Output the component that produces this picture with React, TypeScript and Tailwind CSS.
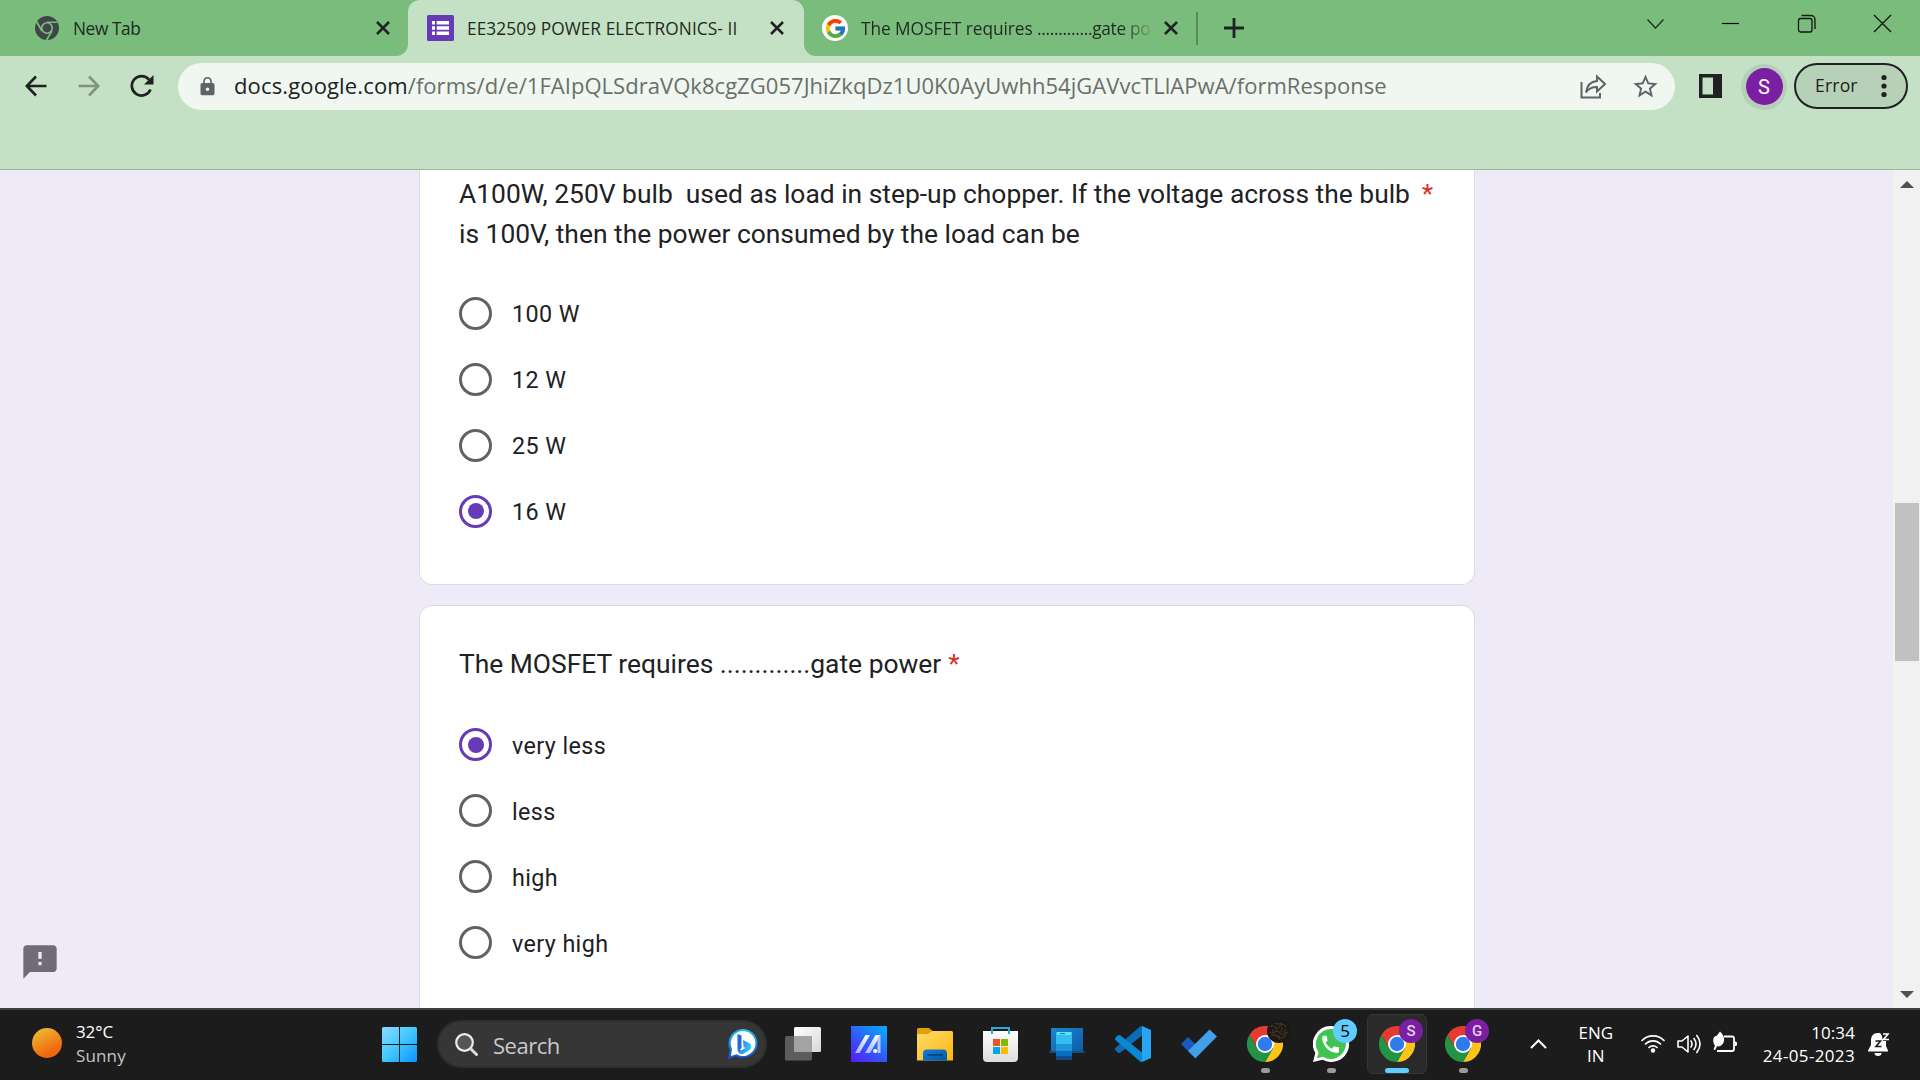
import React from "react";
import { FcGoogle } from "react-icons/fc";
import { MdFeedback, MdLock, MdStarBorder } from "react-icons/md";

const UI = "font-['Open_Sans','Noto_Sans',sans-serif]";

function CloseX({ className = "" }: { className?: string }) {
  return (
    <svg className={`h-[14px] w-[14px] shrink-0 ${className}`} viewBox="0 0 14 14">
      <path d="M1 1l12 12M13 1L1 13" stroke="#202124" strokeWidth="2.5" fill="none" />
    </svg>
  );
}

function MonoChrome() {
  return (
    <svg className="h-6 w-6 shrink-0" viewBox="0 0 48 48">
      <circle cx="24" cy="24" r="24" fill="#3f4548" />
      <circle cx="24" cy="24" r="10.5" fill="none" stroke="#7abc7c" strokeWidth="3.4" />
      <path d="M24 12.5H45M34 30L23 48M14 30L3 11" stroke="#7abc7c" strokeWidth="3.4" fill="none" />
    </svg>
  );
}

function ChromeLogo() {
  return (
    <svg className="h-9 w-9" viewBox="0 0 48 48">
      <path d="M24 12H44.8A24 24 0 0 1 24 48L34.4 30Z" fill="#fcc419" />
      <path d="M3.2 12A24 24 0 0 1 44.8 12H24L13.6 30Z" fill="#e53c31" />
      <path d="M3.2 12A24 24 0 0 0 24 48L34.4 30L24 24L13.6 30Z" fill="#239346" />
      <circle cx="24" cy="24" r="12" fill="#fff" />
      <circle cx="24" cy="24" r="9.6" fill="#2f7bed" />
    </svg>
  );
}

function FormsIcon() {
  return (
    <svg className="h-[26px] w-[27px] shrink-0" viewBox="0 0 27 26">
      <rect width="27" height="26" rx="1.5" fill="#673ab7" />
      <path
        d="M5 6h3v3.4H5zM9.7 6H22v3.4H9.7zM5 11.3h3v3.4H5zM9.7 11.3H22v3.4H9.7zM5 16.6h3V20H5zM9.7 16.6H22V20H9.7z"
        fill="#fff"
      />
    </svg>
  );
}

function TabStrip() {
  return (
    <div className={`flex h-14 items-start bg-[#7abc7c] text-[17.3px] text-[#1f2a20] ${UI}`}>
      <div className="relative flex h-14 w-[408px] items-center pl-[35px] pr-[18px]">
        <MonoChrome />
        <span className="ml-[14px] flex-1 pt-[2px] tracking-[-0.4px]">New Tab</span>
        <CloseX />
        <span className="absolute bottom-0 right-0 h-3 w-3 bg-[#c5e1c5]">
          <span className="block h-3 w-3 rounded-br-[12px] bg-[#7abc7c]" />
        </span>
      </div>
      <div className="flex h-14 w-[396px] items-center rounded-t-[12px] bg-[#c5e1c5] pl-[19px] pr-5">
        <FormsIcon />
        <span className="ml-[13px] flex-1 whitespace-nowrap pt-[2px] tracking-[0.07px]">
          EE32509 POWER ELECTRONICS- II
        </span>
        <CloseX />
      </div>
      <div className="relative flex h-14 w-[392px] items-center pl-[18px] pr-[18px]">
        <span className="absolute bottom-0 left-0 h-3 w-3 bg-[#c5e1c5]">
          <span className="block h-3 w-3 rounded-bl-[12px] bg-[#7abc7c]" />
        </span>
        <span className="flex h-[26px] w-[26px] shrink-0 items-center justify-center rounded-full bg-white">
          <FcGoogle size={23} />
        </span>
        <span className="ml-[13px] whitespace-nowrap pt-[2px] [mask-image:linear-gradient(to_right,#000_260px,transparent_294px)]">
          <span className="tracking-[-0.05px]">The MOSFET requires </span>
          <span className="tracking-[-0.3px]">.............gate po</span>
        </span>
        <CloseX className="ml-auto" />
      </div>
      <span className="mt-3 h-[33px] w-[2px] bg-[#578a5a]" />
      <svg className="ml-[26px] mt-[18px] h-5 w-5" viewBox="0 0 20 20">
        <path d="M10 0v20M0 10h20" stroke="#202124" strokeWidth="2.8" />
      </svg>
      <div className="ml-auto flex pr-[28px] pt-[14px]">
        <svg className="mr-[56px] h-[19px] w-[19px]" viewBox="0 0 19 19">
          <path d="M1.5 5.5L9.5 14L17.500 5.500" stroke="#1d2b1e" strokeWidth="1.2" fill="none" />
        </svg>
        <svg className="mr-[57px] h-[19px] w-[19px]" viewBox="0 0 19 19">
          <path d="M1 9.500H18" stroke="#000" strokeWidth="1.2" />
        </svg>
        <svg className="mr-[57px] h-[19px] w-[19px]" viewBox="0 0 19 19">
          <g fill="none" stroke="#101510" strokeWidth="1.3">
            <rect x="1.500" y="4.500" width="13.500" height="13.500" rx="2" />
            <path d="M4.500 1.500H14a4 4 0 0 1 4 4V15" />
          </g>
        </svg>
        <svg className="h-[19px] w-[19px]" viewBox="0 0 19 19">
          <path d="M1 1L18 18M18 1L1 18" stroke="#101510" strokeWidth="1.3" />
        </svg>
      </div>
    </div>
  );
}

function Toolbar() {
  return (
    <div className={`h-[114px] border-b border-[#9fb79f] bg-[#c5e1c5] pt-[7px] ${UI}`}>
      <div className="flex h-[47px] items-center">
        <svg className="mb-[2px] ml-[25px] h-[22px] w-[22px]" viewBox="0 0 22 22">
          <path d="M21.500 11H2M11 1.500L1.800 11L11 20.500" stroke="#202124" strokeWidth="2.6" fill="none" />
        </svg>
        <svg className="mb-[2px] ml-[31px] h-[22px] w-[22px]" viewBox="0 0 22 22">
          <path d="M.5 11H20M11 1.500L20.200 11L11 20.500" stroke="#7f947f" strokeWidth="2.6" fill="none" />
        </svg>
        <svg className="mb-[2px] ml-[30px] h-[24px] w-[24px]" viewBox="0 0 24 24">
          <path d="M20.500 15.500A9.700 9.700 0 1 1 19 5.600" stroke="#202124" strokeWidth="2.7" fill="none" />
          <path d="M23.500 1V10.500H14Z" fill="#202124" />
        </svg>
        <div className="ml-6 flex h-[47px] w-[1497px] items-center rounded-full bg-[#f0f7f0] pl-[19px] pr-[15px]">
          <MdLock size={21} color="#5f6368" />
          <span className="mb-[2px] ml-4 flex-1 whitespace-nowrap text-[22px] tracking-[0.04px] text-[#6a6f6b]">
            <span className="tracking-[0.14px] text-[#202124]">docs.google.com</span>
            /forms/d/e/1FAIpQLSdraVQk8cgZG057JhiZkqDz1U0K0AyUwhh54jGAVvcTLlAPwA/formResponse
          </span>
          <svg className="mr-[25px] h-[25px] w-[26px]" viewBox="0 0 26 25">
            <g fill="none" stroke="#5f6368" strokeWidth="2" strokeLinejoin="miter">
              <path d="M1.500 8V23.500H20V19" />
              <path d="M17 2.500L25 10L17 17.500V13C12 13 8.500 14.500 6 18.500C7 11 11 7.500 17 7Z" />
            </g>
          </svg>
          <MdStarBorder size={29} color="#5f6368" />
        </div>
        <svg className="mb-[2px] ml-[24px] h-6 w-[23px]" viewBox="0 0 23 24">
          <path d="M0 0h23v24H0zM3.500 3.500v17H14v-17z" fillRule="evenodd" fill="#202124" />
        </svg>
        <span className="ml-[19px] flex h-[46px] w-[46px] items-center justify-center rounded-full bg-[#b6cfb8]">
          <span className="flex h-[37px] w-[37px] items-center justify-center rounded-full bg-[#7b1fa2] text-[20px] text-white font-['Roboto',sans-serif]">
            S
          </span>
        </span>
        <div className="mb-px ml-[7px] flex h-[46px] w-[114px] items-center rounded-full border-2 border-[#202124] bg-[#b7d0b8] pl-[19px] text-[17.500px] text-[#202124]">
          <span className="mb-px tracking-[0.2px]">Error</span>
          <svg className="ml-auto mr-[19px] h-[26px] w-[6px]" viewBox="0 0 6 26">
            <circle cx="3" cy="4.500" r="2.600" fill="#202124" />
            <circle cx="3" cy="13" r="2.600" fill="#202124" />
            <circle cx="3" cy="21.500" r="2.600" fill="#202124" />
          </svg>
        </div>
      </div>
    </div>
  );
}

function Option({ label, checked }: { label: string; checked?: boolean }) {
  return (
    <div className="flex h-[66px] items-center">
      <span
        className={`flex h-[33px] w-[33px] items-center justify-center rounded-full border-[3px] ${
          checked ? "border-[#673ab7]" : "border-[#5f6368]"
        }`}
      >
        {checked && <span className="h-4 w-4 rounded-full bg-[#673ab7]" />}
      </span>
      <span className="ml-5 pt-[3px] text-[23.3px] tracking-[0.4px]">{label}</span>
    </div>
  );
}

function FormPage() {
  return (
    <main className="relative flex h-[838px] overflow-hidden bg-[#eeeaf8] text-[#202124] font-['Roboto',sans-serif]">
      <div className="ml-[419px] w-[1056px]">
        <section className="h-[415px] rounded-b-[13px] border border-t-0 border-[#dadce0] bg-white px-[39px] pt-[5px]">
          <div className="flex justify-between text-[26.4px] leading-[39.6px]">
            <h2 className="whitespace-pre">
              {"A100W, 250V bulb  used as load in step-up chopper. If the voltage across the bulb\nis 100V, then the power consumed by the load can be"}
            </h2>
            <span className="mr-[2px] text-[#d93025]">*</span>
          </div>
          <div className="mt-[26px]">
            <Option label="100 W" />
            <Option label="12 W" />
            <Option label="25 W" />
            <Option label="16 W" checked />
          </div>
        </section>
        <section className="mt-5 h-[420px] rounded-t-[13px] border border-[#dadce0] bg-white px-[39px] pt-[39px]">
          <div className="flex text-[26.4px] leading-[39.6px]">
            <h2>The MOSFET requires .............gate power</h2>
            <span className="ml-[7px] text-[#d93025]">*</span>
          </div>
          <div className="mt-[27px]">
            <Option label="very less" checked />
            <Option label="less" />
            <Option label="high" />
            <Option label="very high" />
          </div>
        </section>
      </div>
      <MdFeedback size={40} color="#706c76" className="absolute left-[20px] top-[772px]" />
      <div className="ml-auto flex w-[27px] flex-col items-center bg-[#f1f1f1]">
        <svg className="mt-[11px] h-[7px] w-[14px]" viewBox="0 0 14 7">
          <path d="M7 0L14 7H0Z" fill="#505050" />
        </svg>
        <span className="mt-[315px] h-[158px] w-6 bg-[#c1c1c1]" />
        <svg className="mb-[10px] mt-auto h-[7px] w-[14px]" viewBox="0 0 14 7">
          <path d="M7 7L14 0H0Z" fill="#505050" />
        </svg>
      </div>
    </main>
  );
}

function BingIcon() {
  return (
    <svg className="h-[30px] w-[30px]" viewBox="0 0 30 30">
      <defs>
        <linearGradient id="bingRing" x1="0" y1="0" x2="0" y2="1">
          <stop offset="0" stopColor="#1fc4ee" />
          <stop offset="1" stopColor="#1a4fd0" />
        </linearGradient>
        <linearGradient id="bingB" x1="0" y1="0" x2="1" y2="0.3">
          <stop offset="0" stopColor="#2a62e0" />
          <stop offset="1" stopColor="#35c8f2" />
        </linearGradient>
      </defs>
      <path d="M15.500 0A14.500 14.500 0 1 1 8 27.200L0 30L2 21A14.500 14.500 0 0 1 15.500 0Z" fill="url(#bingRing)" />
      <path d="M15.500 2A12.500 12.500 0 1 1 8.500 25.200L3 27L4 20A12.500 12.500 0 0 1 15.500 2Z" fill="#fff" />
      <path d="M9.500 5l4 1.500v12l-2 3.500-2-2z" fill="#2567e2" />
      <path d="M15 11l7 3.500c2 2 1.500 5-.5 6.800L15 25c-3 .8-5.500-1.500-5.500-4.500l4 .8 4-2.300-2-1z" fill="url(#bingB)" />
    </svg>
  );
}

function Cell({
  children,
  active,
  dot,
}: {
  children: React.ReactNode;
  active?: boolean;
  dot?: boolean;
}) {
  return (
    <div
      className={`relative flex h-[60px] w-[60px] items-center justify-center rounded-[6px] ${
        active ? "border border-[#373737] bg-[#2a2a2a]" : ""
      }`}
    >
      {children}
      {dot && <span className="absolute bottom-[1px] left-[26px] h-[5px] w-[9px] rounded-full bg-[#9a9a9a]" />}
      {active && <span className="absolute bottom-0 left-[17px] h-[5px] w-6 rounded-full bg-[#60cdff]" />}
    </div>
  );
}

const BADGE = "absolute left-[32px] top-[5px] flex h-6 w-6 items-center justify-center rounded-full";

function Taskbar() {
  return (
    <footer className={`flex h-[72px] items-start border-t-2 border-[#3f4040] bg-[#1c1c1c] pt-1 text-white ${UI}`}>
      <div className="flex h-[60px] w-[369px] items-center pl-8">
        <svg className="mb-[2px] h-[30px] w-[30px]" viewBox="0 0 30 30">
          <defs>
            <linearGradient id="sun" x1="0.2" y1="0" x2="0.7" y2="1">
              <stop offset="0" stopColor="#f0bd35" />
              <stop offset="0.8" stopColor="#f0690f" />
            </linearGradient>
          </defs>
          <circle cx="15" cy="15" r="15" fill="url(#sun)" />
        </svg>
        <div className="ml-[14px] text-[17px] leading-[24px]">
          <div className="tracking-[-0.1px]">32°C</div>
          <div className="tracking-[0.15px] text-[#c5c5c5]">Sunny</div>
        </div>
      </div>
      <Cell>
        <svg className="h-[35px] w-[35px]" viewBox="0 0 35 35">
          <defs>
            <linearGradient id="win" x1="0" y1="0" x2="1" y2="1">
              <stop offset="0" stopColor="#8adcff" />
              <stop offset="0.5" stopColor="#42c6ff" />
              <stop offset="1" stopColor="#0893ff" />
            </linearGradient>
          </defs>
          <path
            d="M1.500 0H17v17H0V1.500A1.500 1.500 0 0 1 1.500 0zM18 0h15.500A1.500 1.500 0 0 1 35 1.500V17H18zM0 18h17v17H1.500A1.500 1.500 0 0 1 0 33.500zM18 18h17v15.500a1.500 1.500 0 0 1-1.500 1.500H18z"
            fill="url(#win)"
          />
        </svg>
      </Cell>
      <div className="ml-[8px] mr-[6px] mt-[6px] flex h-12 w-[330px] items-center rounded-full border-2 border-[#2e2e2e] bg-[#363636] pl-4 pr-[7px]">
        <svg className="h-[23px] w-[23px]" viewBox="0 0 23 23">
          <circle cx="9.500" cy="9.500" r="8.300" fill="#555" stroke="#ececec" strokeWidth="2.200" />
          <path d="M15.500 15.500L21.500 21.500" stroke="#dcdcdc" strokeWidth="3" strokeLinecap="round" />
        </svg>
        <span className="ml-[15px] pt-[2px] text-[22px] tracking-[-0.5px] text-[#c8cacb]">Search</span>
        <span className="ml-auto">
          <BingIcon />
        </span>
      </div>
      <div className="flex gap-[6px]">
        <Cell>
          <svg className="h-9 w-9" viewBox="0 0 36 36">
            <defs>
              <linearGradient id="tvw" x1="0" y1="0" x2="1" y2="1">
                <stop offset="0" stopColor="#fff" />
                <stop offset="1" stopColor="#d8d8d8" />
              </linearGradient>
            </defs>
            <rect x="9" y="1" width="27" height="25" rx="1.500" fill="url(#tvw)" />
            <rect x="0" y="10" width="27" height="24.500" rx="1.500" fill="#5c5c5c" />
            <rect x="9" y="10" width="18" height="16" fill="#a3a3a3" />
          </svg>
        </Cell>
        <Cell>
          <svg className="h-9 w-9" viewBox="0 0 36 36">
            <defs>
              <linearGradient id="asus" x1="0" y1="1" x2="0.8" y2="0">
                <stop offset="0" stopColor="#5b18f5" />
                <stop offset="0.500" stopColor="#2f5af8" />
                <stop offset="1" stopColor="#0aa3ff" />
              </linearGradient>
              <linearGradient id="asusBar" x1="0" y1="0" x2="0" y2="1">
                <stop offset="0" stopColor="#fff" />
                <stop offset="1" stopColor="#a9b4fb" />
              </linearGradient>
            </defs>
            <rect width="36" height="36" fill="url(#asus)" />
            <path d="M14.500 9h4.500L8.500 27H4zM24.500 9H29.500L19 27h-5z" fill="url(#asusBar)" />
            <path d="M26.500 12L29.500 9v18h-3z" fill="#b9c6fd" />
            <circle cx="24.200" cy="25" r="2.100" fill="#fff" />
          </svg>
        </Cell>
        <Cell>
          <svg className="h-9 w-9" viewBox="0 0 36 36">
            <defs>
              <linearGradient id="fold" x1="0" y1="0" x2="1" y2="1">
                <stop offset="0" stopColor="#ffdb6e" />
                <stop offset="1" stopColor="#fbb70c" />
              </linearGradient>
              <linearGradient id="foldB" x1="0" y1="0" x2="1" y2="1">
                <stop offset="0" stopColor="#0d7fdc" />
                <stop offset="1" stopColor="#0558a4" />
              </linearGradient>
            </defs>
            <path d="M0 3.500A1.500 1.500 0 0 1 1.500 2H12l4 3.500V9H0z" fill="#e2a005" />
            <path d="M0 8h11l4-3h19.500A1.500 1.500 0 0 1 36 6.500V34.500H0z" fill="url(#fold)" />
            <path d="M6 34.500V27.500A4 4 0 0 1 10 23.500H26a4 4 0 0 1 4 4V34.500z" fill="url(#foldB)" />
            <rect x="10" y="28" width="16" height="1.800" rx=".9" fill="#053f78" />
          </svg>
        </Cell>
        <Cell>
          <svg className="h-9 w-9" viewBox="0 0 36 36">
            <defs>
              <linearGradient id="store" x1="0" y1="0" x2="0" y2="1">
                <stop offset="0" stopColor="#fff" />
                <stop offset="1" stopColor="#dcdcdc" />
              </linearGradient>
            </defs>
            <path d="M0 5h35v27a4 4 0 0 1-4 4H4a4 4 0 0 1-4-4z" fill="url(#store)" />
            <path d="M9 8V2h17v6" fill="none" stroke="#27a9dc" strokeWidth="2" />
            <path d="M10 13h7v7h-7z" fill="#f25022" />
            <path d="M18 13h7v7h-7z" fill="#7fba00" />
            <path d="M10 21h7v7h-7z" fill="#00a4ef" />
            <path d="M18 21h7v7h-7z" fill="#ffb900" />
          </svg>
        </Cell>
        <Cell>
          <svg className="h-9 w-9" viewBox="0 0 36 36">
            <defs>
              <linearGradient id="lap" x1="0" y1="0" x2="1" y2="1">
                <stop offset="0" stopColor="#1a86cf" />
                <stop offset="1" stopColor="#0f5ba9" />
              </linearGradient>
            </defs>
            <rect x="2" y="2" width="32" height="23.500" rx="1" fill="url(#lap)" />
            <path d="M0 25h36l-1 2H1z" fill="#154c85" />
            <rect x="7" y="6" width="16" height="28" rx="1" fill="#0a6cc0" />
            <path d="M7 6h16v12H7z" fill="#36bdf0" />
            <path d="M7 18h16v7H7z" fill="#1a95d8" />
            <path d="M7 30h16v4H7z" fill="#134b86" />
            <path d="M8 6h14v3H8z" fill="#58e4fb" />
            <path d="M11 7h5v1.200h-5z" fill="#1387b8" />
          </svg>
        </Cell>
        <Cell>
          <svg className="h-9 w-9" viewBox="0 0 36 36">
            <path d="M27 0v9.500L5.500 26.500a2.500 2.500 0 0 1-3.200-.2L.7 24.500a1.800 1.800 0 0 1 0-2.700L25 .6z" fill="#0a6cb5" />
            <path d="M27 36v-9.500L5.500 9.500a2.500 2.500 0 0 0-3.200.2L.7 11.500a1.800 1.800 0 0 0 0 2.700L25 35.400z" fill="#0a88d6" />
            <path d="M27 0l9 4v28l-9 4z" fill="#27a5f2" />
          </svg>
        </Cell>
        <Cell>
          <svg className="h-9 w-9" viewBox="0 0 36 36">
            <path d="M0 18l7-7 14 14-7 7z" fill="#185abd" />
            <path d="M7 25L28.500 3.500l7.500 7L14.500 32.200z" fill="#41a0ec" />
          </svg>
        </Cell>
        <Cell dot>
          <ChromeLogo />
          <span className={BADGE}>
            <svg className="h-6 w-6" viewBox="0 0 24 24">
              <circle cx="12" cy="12" r="12" fill="#1e1813" />
              <g stroke="#41362b" strokeWidth="1.200" fill="none">
                <path d="M3 8q3-3 5 0t5-1 6 1M2 13q3 2 6 0t5 1 8-1M4 17q4-2 7 1t8-2M8 4q3 2 7 0M9 9v4M15 8l-1 5M6 10v5M18 10v4M12 16v5" />
              </g>
            </svg>
          </span>
        </Cell>
        <Cell dot>
          <svg className="h-9 w-9" viewBox="0 0 36 36">
            <path d="M18 0A18 18 0 1 1 9.500 33.800L0 36L2.300 27A18 18 0 0 1 18 0Z" fill="#fff" />
            <path d="M18 3A15 15 0 1 1 10 30.800L4 32.200L5.600 26.500A15 15 0 0 1 18 3Z" fill="#3fc351" />
            <path
              transform="translate(6.500 6.500) scale(.93)"
              d="M6.620 10.790c1.440 2.830 3.760 5.140 6.590 6.590l2.200-2.200c.27-.27.67-.36 1.020-.24 1.120.37 2.330.57 3.570.57.55 0 1 .45 1 1V20c0 .55-.45 2-2 2-8.390 0-16-7.610-16-16 0-2 .45-2 1-2.500h3c.55 0 1 .45 1 1 0 1.250.2 2.450.57 3.570.11.35.03.74-.25 1.020z"
              fill="#fff"
            />
          </svg>
          <span className={`${BADGE} bg-[#60cdff] text-[17px] text-black`}>5</span>
        </Cell>
        <Cell active>
          <ChromeLogo />
          <span className="absolute left-[31px] top-[4px] flex h-6 w-6 items-center justify-center rounded-full bg-[#7b1fa2] text-[15px] font-medium text-[#e5cdee] font-['Roboto',sans-serif]">
            S
          </span>
        </Cell>
        <Cell dot>
          <ChromeLogo />
          <span className={`${BADGE} bg-[#7b1fa2] text-[15px] font-medium text-[#e5cdee] font-['Roboto',sans-serif]`}>
            G
          </span>
        </Cell>
      </div>
      <div className="ml-auto flex h-[60px] items-center pr-[30px] text-[17px] leading-[23.500px]">
        <svg className="mr-[31px] h-[10px] w-[17px]" viewBox="0 0 17 10">
          <path d="M1 9L8.500 1.500L16 9" stroke="#fff" strokeWidth="2" fill="none" />
        </svg>
        <div className="mr-[27px] w-[36px] text-center">
          <div>ENG</div>
          <div>IN</div>
        </div>
        <svg className="mb-[2px] mr-3 h-6 w-6" viewBox="0 0 24 24">
          <g fill="none" stroke="#fff" strokeWidth="1.700" strokeLinecap="round">
            <path d="M1 9.500a15.500 15.500 0 0 1 22 0M4.500 13a10.500 10.500 0 0 1 15 0M8 16.500a5.700 5.700 0 0 1 8 0" />
          </g>
          <circle cx="12" cy="19.500" r="2.200" fill="#fff" />
        </svg>
        <svg className="mr-3 h-6 w-6" viewBox="0 0 24 24">
          <g fill="none" stroke="#fff" strokeWidth="1.600" strokeLinecap="round" strokeLinejoin="round">
            <path d="M1 9h4l6-5v16l-6-5H1z" />
            <path d="M14 9q2 3 0 6M17 6.500q4 5.500 0 11M19.800 3.500q6.500 8.500 0 17" />
          </g>
        </svg>
        <svg className="mb-[2px] mr-[26px] h-6 w-6" viewBox="0 0 24 24">
          <path d="M11 5.500h8a2 2 0 0 1 2 2v10.500a2 2 0 0 1-2 2H4" fill="none" stroke="#fff" strokeWidth="1.800" />
          <path d="M21.500 10.500h1a1.500 1.500 0 0 1 1.500 1.500v1.500a1.500 1.500 0 0 1-1.500 1.500h-1z" fill="#fff" />
          <path d="M7 .5c4.500 4 5 8.500 3 12-1.500 2.500-4 3.300-6 2.800l-2 4-1.500-1 1.500-3.500C-1 10 0 5 3.500 5z" fill="#fff" />
        </svg>
        <div className="mr-[13px] text-right">
          <div className="tracking-[0.1px]">10:34</div>
          <div className="tracking-[0.35px]">24-05-2023</div>
        </div>
        <svg className="h-[24px] w-[22px]" viewBox="0 0 22 24">
          <path d="M10 1C5 1 3 4.500 3 8.500V13L0 18.500V19.500H20V18.500L18 14V9L12 1Z" fill="#fff" />
          <path d="M6.500 21h7a3.500 3 0 0 1-7 0z" fill="#fff" />
          <path d="M13 -1h9v10h-7z" fill="#1c1c1c" />
          <path d="M15 2h5l-4.500 5.500H21" stroke="#fff" strokeWidth="1.600" fill="none" />
          <path d="M7.500 9h5L8 14.500h5.500" stroke="#1c1c1c" strokeWidth="1.600" fill="none" />
        </svg>
      </div>
    </footer>
  );
}

export default function App() {
  return (
    <div className="h-[1080px] w-[1920px] overflow-hidden">
      <TabStrip />
      <Toolbar />
      <FormPage />
      <Taskbar />
    </div>
  );
}
